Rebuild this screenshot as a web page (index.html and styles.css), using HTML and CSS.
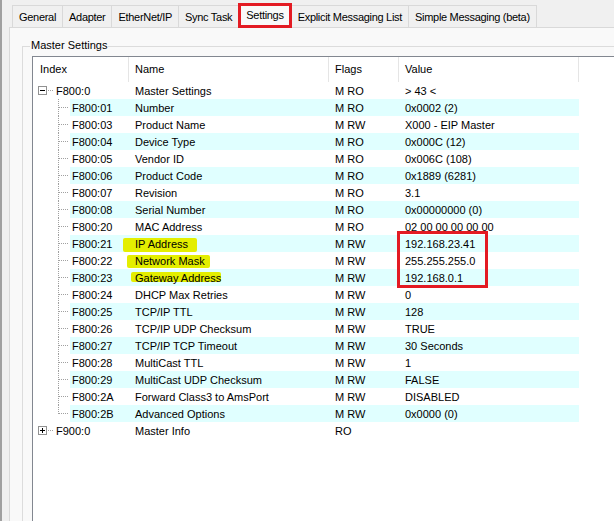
FILE: index.html
```html
<!DOCTYPE html>
<html lang="en">
<head>
  <meta charset="UTF-8">
  <meta name="viewport" content="width=device-width, initial-scale=1.0">
  <link rel="stylesheet" href="styles.css">
</head>
<body>
  <div class="window">
    <!-- Onglets -->
    <div class="tabstrip">
      <div class="tab">General</div>
      <div class="tab">Adapter</div>
      <div class="tab">EtherNet/IP</div>
      <div class="tab">Sync Task</div>
      <div class="tab tab-active">Settings</div>
      <div class="tab">Explicit Messaging List</div>
      <div class="tab">Simple Messaging (beta)</div>
    </div>

    <div class="tabpage">
      <div class="group">
        <span class="group-title">Master Settings</span>

        <div class="listview">
          <!-- En-tête -->
          <div class="lv-header">
            <div class="lv-col col-index">Index</div>
            <div class="lv-col col-name">Name</div>
            <div class="lv-col col-flags">Flags</div>
            <div class="lv-col col-value">Value</div>
          </div>

          <!-- F800:0 -->
          <div class="row row-top">
            <div class="gutter"><span class="expander"></span></div>
            <div class="cells">
              <div class="cell cell-index">F800:0</div>
              <div class="cell cell-name">Master Settings</div>
              <div class="cell cell-flags">M RO</div>
              <div class="cell cell-value">&gt; 43 &lt;</div>
            </div>
          </div>
          <div class="row row-child row-alt">
            <div class="gutter"></div>
            <div class="cells">
              <div class="cell cell-index">F800:01</div>
              <div class="cell cell-name">Number</div>
              <div class="cell cell-flags">M RO</div>
              <div class="cell cell-value">0x0002 (2)</div>
            </div>
          </div>
          <div class="row row-child">
            <div class="gutter"></div>
            <div class="cells">
              <div class="cell cell-index">F800:03</div>
              <div class="cell cell-name">Product Name</div>
              <div class="cell cell-flags">M RW</div>
              <div class="cell cell-value">X000 - EIP Master</div>
            </div>
          </div>
          <div class="row row-child row-alt">
            <div class="gutter"></div>
            <div class="cells">
              <div class="cell cell-index">F800:04</div>
              <div class="cell cell-name">Device Type</div>
              <div class="cell cell-flags">M RO</div>
              <div class="cell cell-value">0x000C (12)</div>
            </div>
          </div>
          <div class="row row-child">
            <div class="gutter"></div>
            <div class="cells">
              <div class="cell cell-index">F800:05</div>
              <div class="cell cell-name">Vendor ID</div>
              <div class="cell cell-flags">M RO</div>
              <div class="cell cell-value">0x006C (108)</div>
            </div>
          </div>
          <div class="row row-child row-alt">
            <div class="gutter"></div>
            <div class="cells">
              <div class="cell cell-index">F800:06</div>
              <div class="cell cell-name">Product Code</div>
              <div class="cell cell-flags">M RO</div>
              <div class="cell cell-value">0x1889 (6281)</div>
            </div>
          </div>
          <div class="row row-child">
            <div class="gutter"></div>
            <div class="cells">
              <div class="cell cell-index">F800:07</div>
              <div class="cell cell-name">Revision</div>
              <div class="cell cell-flags">M RO</div>
              <div class="cell cell-value">3.1</div>
            </div>
          </div>
          <div class="row row-child row-alt">
            <div class="gutter"></div>
            <div class="cells">
              <div class="cell cell-index">F800:08</div>
              <div class="cell cell-name">Serial Number</div>
              <div class="cell cell-flags">M RO</div>
              <div class="cell cell-value">0x00000000 (0)</div>
            </div>
          </div>
          <div class="row row-child">
            <div class="gutter"></div>
            <div class="cells">
              <div class="cell cell-index">F800:20</div>
              <div class="cell cell-name">MAC Address</div>
              <div class="cell cell-flags">M RO</div>
              <div class="cell cell-value">02 00 00 00 00 00</div>
            </div>
          </div>
          <div class="row row-child row-alt">
            <div class="gutter"></div>
            <div class="cells">
              <div class="cell cell-index">F800:21</div>
              <div class="cell cell-name"><span class="hl hl-ip">IP Address</span></div>
              <div class="cell cell-flags">M RW</div>
              <div class="cell cell-value">192.168.23.41</div>
            </div>
          </div>
          <div class="row row-child">
            <div class="gutter"></div>
            <div class="cells">
              <div class="cell cell-index">F800:22</div>
              <div class="cell cell-name"><span class="hl hl-mask">Network Mask</span></div>
              <div class="cell cell-flags">M RW</div>
              <div class="cell cell-value">255.255.255.0</div>
            </div>
          </div>
          <div class="row row-child row-alt">
            <div class="gutter"></div>
            <div class="cells">
              <div class="cell cell-index">F800:23</div>
              <div class="cell cell-name"><span class="hl hl-gw">Gateway Address</span></div>
              <div class="cell cell-flags">M RW</div>
              <div class="cell cell-value">192.168.0.1</div>
            </div>
          </div>
          <div class="row row-child">
            <div class="gutter"></div>
            <div class="cells">
              <div class="cell cell-index">F800:24</div>
              <div class="cell cell-name">DHCP Max Retries</div>
              <div class="cell cell-flags">M RW</div>
              <div class="cell cell-value">0</div>
            </div>
          </div>
          <div class="row row-child row-alt">
            <div class="gutter"></div>
            <div class="cells">
              <div class="cell cell-index">F800:25</div>
              <div class="cell cell-name">TCP/IP TTL</div>
              <div class="cell cell-flags">M RW</div>
              <div class="cell cell-value">128</div>
            </div>
          </div>
          <div class="row row-child">
            <div class="gutter"></div>
            <div class="cells">
              <div class="cell cell-index">F800:26</div>
              <div class="cell cell-name">TCP/IP UDP Checksum</div>
              <div class="cell cell-flags">M RW</div>
              <div class="cell cell-value">TRUE</div>
            </div>
          </div>
          <div class="row row-child row-alt">
            <div class="gutter"></div>
            <div class="cells">
              <div class="cell cell-index">F800:27</div>
              <div class="cell cell-name">TCP/IP TCP Timeout</div>
              <div class="cell cell-flags">M RW</div>
              <div class="cell cell-value">30 Seconds</div>
            </div>
          </div>
          <div class="row row-child">
            <div class="gutter"></div>
            <div class="cells">
              <div class="cell cell-index">F800:28</div>
              <div class="cell cell-name">MultiCast TTL</div>
              <div class="cell cell-flags">M RW</div>
              <div class="cell cell-value">1</div>
            </div>
          </div>
          <div class="row row-child row-alt">
            <div class="gutter"></div>
            <div class="cells">
              <div class="cell cell-index">F800:29</div>
              <div class="cell cell-name">MultiCast UDP Checksum</div>
              <div class="cell cell-flags">M RW</div>
              <div class="cell cell-value">FALSE</div>
            </div>
          </div>
          <div class="row row-child">
            <div class="gutter"></div>
            <div class="cells">
              <div class="cell cell-index">F800:2A</div>
              <div class="cell cell-name">Forward Class3 to AmsPort</div>
              <div class="cell cell-flags">M RW</div>
              <div class="cell cell-value">DISABLED</div>
            </div>
          </div>
          <div class="row row-child row-alt row-last">
            <div class="gutter"></div>
            <div class="cells">
              <div class="cell cell-index">F800:2B</div>
              <div class="cell cell-name">Advanced Options</div>
              <div class="cell cell-flags">M RW</div>
              <div class="cell cell-value">0x0000 (0)</div>
            </div>
          </div>

          <!-- F900:0 -->
          <div class="row row-top">
            <div class="gutter"><span class="expander expander-plus"></span></div>
            <div class="cells">
              <div class="cell cell-index">F900:0</div>
              <div class="cell cell-name">Master Info</div>
              <div class="cell cell-flags">RO</div>
              <div class="cell cell-value"></div>
            </div>
          </div>

          <!-- Cadre rouge autour des adresses -->
          <div class="mark"></div>
        </div>
      </div>
    </div>
  </div>
</body>
</html>
```

FILE: styles.css
```css
body, html {
  margin: 0;
  padding: 0;
}

body {
  background-color: #f0f0f0;
  font-family: "Liberation Sans", Arial, sans-serif;
  font-size: 11px;
  color: #000;
  height: 521px;
  overflow: hidden;
}

.window {
  width: 660px;
  height: 560px;
  border-left: 2px solid #a0a0a0;
}

/* Onglets */
.tabstrip {
  display: flex;
  align-items: flex-end;
  height: 27px;
  padding-left: 10px;
}

.tab {
  height: 21px;
  line-height: 22px;
  padding: 0 6px;
  border: 1px solid #d9d9d9;
  border-bottom: none;
  margin-right: -1px;
  background-color: #f0f0f0;
  letter-spacing: -0.3px;
  white-space: nowrap;
}

.tab-active {
  position: relative;
  z-index: 1;
  height: 19px;
  line-height: 19px;
  padding: 0 5px;
  margin-bottom: -1px;
  border: 3px solid #e31b23;
  background-color: #f9f9f9;
}

.tabpage {
  margin-left: 7px;
  height: 540px;
  border-top: 1px solid #d9d9d9;
  border-left: 1px solid #d9d9d9;
  background-color: #f9f9f9;
}

/* Groupe */
.group {
  margin: 18px 0 0 12px;
  height: 500px;
  border: 1px solid #dcdcdc;
  padding-left: 9px;
}

.group-title {
  display: block;
  width: fit-content;
  margin: -8px 0 0 -2px;
  padding: 0 1px;
  line-height: 13px;
  background-color: #f9f9f9;
}

/* Liste */
.listview {
  position: relative;
  margin-top: 4px;
  height: 480px;
  border: 1px solid #828790;
  background-color: #fff;
}

.lv-header {
  display: flex;
  height: 25px;
}

.lv-col {
  box-sizing: border-box;
  padding-left: 6px;
  line-height: 24px;
  border-right: 1px solid #e5e5e5;
}

.col-index {
  width: 96px;
  padding-left: 7px;
}

.col-name {
  width: 200px;
}

.col-flags {
  width: 70px;
}

.col-value {
  width: 180px;
}

.row {
  display: flex;
  height: 17px;
  line-height: 18px;
}

.gutter {
  position: relative;
  flex: none;
  width: 37px;
}

.row-top .gutter {
  width: 21px;
}

.cells {
  display: flex;
}

.row-alt .cells {
  background-color: #e0ffff;
}

.cell {
  box-sizing: border-box;
  padding-left: 6px;
  white-space: nowrap;
}

.cell-index {
  width: 59px;
  padding-left: 2px;
}

.row-top .cell-index {
  width: 75px;
}

.cell-name {
  width: 200px;
}

.cell-flags {
  width: 70px;
}

.cell-value {
  width: 180px;
}

/* Lignes de l'arbre */
.row-child .gutter::before {
  content: "";
  position: absolute;
  left: 25px;
  top: 0;
  bottom: 0;
  width: 1px;
  background: linear-gradient(#a0a0a0 50%, transparent 50%) 0 0 / 1px 2px;
}

.row-last .gutter::before {
  bottom: 8px;
}

.row-child .gutter::after,
.row-top .gutter::after {
  content: "";
  position: absolute;
  left: 26px;
  top: 8px;
  width: 10px;
  height: 1px;
  background: linear-gradient(to right, #a0a0a0 50%, transparent 50%) 0 0 / 2px 1px;
}

.row-top .gutter::after {
  left: 15px;
  width: 6px;
}

.expander {
  position: absolute;
  left: 5px;
  top: 4px;
  width: 9px;
  height: 9px;
  box-sizing: border-box;
  border: 1px solid #919191;
  background-color: #fff;
}

.expander::before {
  content: "";
  position: absolute;
  left: 1px;
  top: 3px;
  width: 5px;
  height: 1px;
  background-color: #000;
}

.expander-plus::after {
  content: "";
  position: absolute;
  left: 3px;
  top: 1px;
  width: 1px;
  height: 5px;
  background-color: #000;
}

/* Surlignage jaune */
.hl {
  display: block;
  width: fit-content;
  margin-top: 3px;
  line-height: 12px;
  background-color: #e4ee00;
  border-radius: 2px;
}

.hl-ip {
  margin-left: -12px;
  padding: 0 9px 2px 12px;
}

.hl-mask {
  margin-left: -8px;
  padding: 0 5px 1px 8px;
}

.hl-gw {
  margin-left: -4px;
  padding: 0 0 0 4px;
  height: 10px;
}

.mark {
  position: absolute;
  left: 364px;
  top: 174px;
  width: 91px;
  height: 57px;
  box-sizing: border-box;
  border: 3px solid #e31b23;
}
```
